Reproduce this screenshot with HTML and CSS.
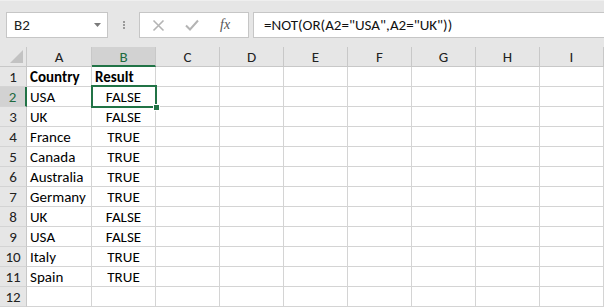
FILE: index.html
```html
<!DOCTYPE html>
<html>
<head>
<meta charset="utf-8">
<link rel="stylesheet" href="styles.css">
</head>
<body>
<div class="app">
  <div class="toolbar">
    <div class="namebox">
      <span class="ref">B2</span>
      <svg class="drop" width="7" height="4" viewBox="0 0 7 4"><path d="M0 0h7L3.5 4z" fill="#7a7a7a"/></svg>
    </div>
    <div class="grip"><i></i><i></i><i></i></div>
    <div class="fxbox">
      <svg class="ico" width="13" height="13" viewBox="0 0 13 13"><path d="M1.5 1.5l10 10M11.5 1.5l-10 10" stroke="#b4b4b4" stroke-width="1.6" fill="none"/></svg>
      <svg class="ico" width="14" height="12" viewBox="0 0 14 12"><path d="M1 6.5l4 4 8-9" stroke="#b4b4b4" stroke-width="2" fill="none"/></svg>
      <span class="fx">fx</span>
    </div>
    <div class="formula">=NOT(OR(A2="USA",A2="UK"))</div>
  </div>
  <div class="sheet">
    <div class="corner"><svg width="13" height="13" viewBox="0 0 13 13"><path d="M13 0V13H0z" fill="#c2c2c2"/></svg></div>
    <div class="ch">A</div><div class="ch sel">B</div><div class="ch">C</div><div class="ch">D</div><div class="ch">E</div><div class="ch">F</div><div class="ch">G</div><div class="ch">H</div><div class="ch">I</div>

    <div class="rh">1</div><div class="c b">Country</div><div class="c b">Result</div><div class="c"></div><div class="c"></div><div class="c"></div><div class="c"></div><div class="c"></div><div class="c"></div><div class="c"></div>
    <div class="rh sel">2</div><div class="c">USA</div><div class="c m active">FALSE<span class="handle"></span></div><div class="c"></div><div class="c"></div><div class="c"></div><div class="c"></div><div class="c"></div><div class="c"></div><div class="c"></div>
    <div class="rh">3</div><div class="c">UK</div><div class="c m">FALSE</div><div class="c"></div><div class="c"></div><div class="c"></div><div class="c"></div><div class="c"></div><div class="c"></div><div class="c"></div>
    <div class="rh">4</div><div class="c">France</div><div class="c m">TRUE</div><div class="c"></div><div class="c"></div><div class="c"></div><div class="c"></div><div class="c"></div><div class="c"></div><div class="c"></div>
    <div class="rh">5</div><div class="c">Canada</div><div class="c m">TRUE</div><div class="c"></div><div class="c"></div><div class="c"></div><div class="c"></div><div class="c"></div><div class="c"></div><div class="c"></div>
    <div class="rh">6</div><div class="c">Australia</div><div class="c m">TRUE</div><div class="c"></div><div class="c"></div><div class="c"></div><div class="c"></div><div class="c"></div><div class="c"></div><div class="c"></div>
    <div class="rh">7</div><div class="c">Germany</div><div class="c m">TRUE</div><div class="c"></div><div class="c"></div><div class="c"></div><div class="c"></div><div class="c"></div><div class="c"></div><div class="c"></div>
    <div class="rh">8</div><div class="c">UK</div><div class="c m">FALSE</div><div class="c"></div><div class="c"></div><div class="c"></div><div class="c"></div><div class="c"></div><div class="c"></div><div class="c"></div>
    <div class="rh">9</div><div class="c">USA</div><div class="c m">FALSE</div><div class="c"></div><div class="c"></div><div class="c"></div><div class="c"></div><div class="c"></div><div class="c"></div><div class="c"></div>
    <div class="rh">10</div><div class="c">Italy</div><div class="c m">TRUE</div><div class="c"></div><div class="c"></div><div class="c"></div><div class="c"></div><div class="c"></div><div class="c"></div><div class="c"></div>
    <div class="rh">11</div><div class="c">Spain</div><div class="c m">TRUE</div><div class="c"></div><div class="c"></div><div class="c"></div><div class="c"></div><div class="c"></div><div class="c"></div><div class="c"></div>
    <div class="rh">12</div><div class="c"></div><div class="c"></div><div class="c"></div><div class="c"></div><div class="c"></div><div class="c"></div><div class="c"></div><div class="c"></div><div class="c"></div>
  </div>
</div>
</body>
</html>
```

FILE: styles.css
```css
* { box-sizing: border-box; }
html, body { margin: 0; padding: 0; }
body {
  width: 604px;
  height: 307px;
  overflow: hidden;
  background: #e6e6e6;
  font-family: Carlito, Calibri, Lato, "Liberation Sans", sans-serif;
  font-size: 15px;
  color: #000;
}
.app { display: flex; flex-direction: column; }
.toolbar {
  height: 47px;
  display: flex;
  align-items: flex-start;
  padding: 11px 0 0 6px;
  border-top: 1px solid #efefef;
}
.namebox {
  width: 102px;
  height: 26px;
  background: #fff;
  border: 1px solid #c6c6c6;
  display: flex;
  align-items: center;
  justify-content: space-between;
  padding: 0 6px 0 7px;
  color: #222;
}
.grip {
  width: 31px;
  height: 26px;
  display: flex;
  flex-direction: column;
  align-items: center;
  justify-content: center;
  gap: 1px;
}
.grip i { width: 2px; height: 2px; background: #9a9a9a; display: block; }
.fxbox {
  width: 110px;
  height: 26px;
  background: #fff;
  border: 1px solid #c6c6c6;
  display: flex;
  align-items: center;
  padding: 0 0 0 12px;
  gap: 20px;
}
.fx {
  font-family: "Liberation Serif", serif;
  font-style: italic;
  font-size: 14px;
  color: #555;
  margin-left: 1px;
}
.formula {
  margin-left: 4px;
  flex: 1;
  height: 26px;
  background: #fff;
  border: 1px solid #c6c6c6;
  border-right: none;
  padding: 0 0 0 10px;
  display: flex;
  align-items: center;
  color: #111;
}
.sheet {
  display: grid;
  grid-template-columns: 27px 65px repeat(8, 64px);
  grid-auto-rows: 20px;
  background: #fff;
}
.corner {
  background: #e6e6e6;
  border-right: 1px solid #c8c8c8;
  border-bottom: 1px solid #c8c8c8;
  display: flex;
  align-items: flex-end;
  justify-content: flex-end;
  padding: 0 3px 3px 0;
}
.corner svg { display: block; }
.ch {
  background: #e6e6e6;
  border-right: 1px solid #c8c8c8;
  border-bottom: 1px solid #c8c8c8;
  display: flex;
  align-items: center;
  justify-content: center;
  color: #222;
  padding-top: 1px;
}
.ch.sel {
  background: #d2d2d2;
  border-bottom: 2px solid #217346;
  color: #1e6b40;
}
.rh {
  background: #e6e6e6;
  border-right: 1px solid #c8c8c8;
  border-bottom: 1px solid #d4d4d4;
  display: flex;
  align-items: center;
  justify-content: center;
  color: #222;
}
.rh.sel {
  background: #d2d2d2;
  border-right: 2px solid #217346;
  color: #1e6b40;
}
.c {
  border-right: 1px solid #d4d4d4;
  border-bottom: 1px solid #d4d4d4;
  display: flex;
  align-items: center;
  padding: 0 3px;
  white-space: nowrap;
}
.c.b { font-weight: bold; }
.c.m { justify-content: center; }
.c.active { position: relative; }
.c.active::after {
  content: "";
  position: absolute;
  left: -1px;
  top: -2px;
  right: -2px;
  bottom: -2px;
  border: 2px solid #217346;
}
.handle {
  position: absolute;
  right: -5px;
  bottom: -5px;
  width: 7px;
  height: 7px;
  background: #217346;
  border: 1px solid #fff;
  z-index: 2;
}
```
